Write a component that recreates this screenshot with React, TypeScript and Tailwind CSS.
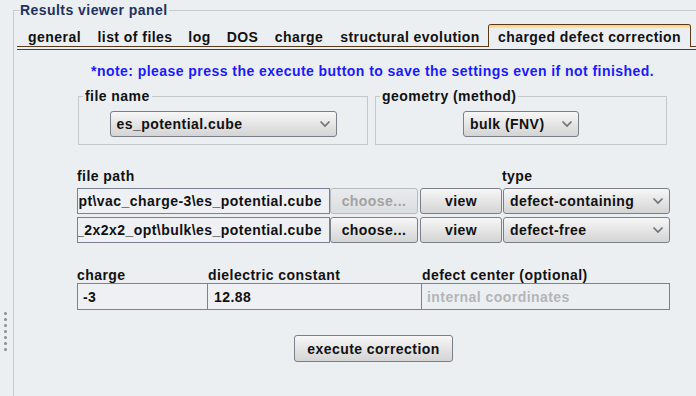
import React from 'react';

const TABS = [
    { label: 'general', w: 'w-[71px]' },
    { label: 'list of files', w: 'w-[90px]' },
    { label: 'log', w: 'w-[39px]' },
    { label: 'DOS', w: 'w-[47px]' },
    { label: 'charge', w: 'w-[66px]' },
    { label: 'structural evolution', w: 'w-[156px]' },
];

function Chevron() {
    return (
        <svg width="12" height="8" viewBox="0 0 12 8" className="shrink-0">
            <path d="M1.5 1.5 L6 6 L10.5 1.5" fill="none" stroke="#6f737a" strokeWidth="1.7" />
        </svg>
    );
}

function Combo({ label, className = '' }: { label: string; className?: string }) {
    return (
        <div className={`flex items-center justify-between h-[26px] pl-[6px] pr-[5px] rounded-[3px] border border-[#7b7f89] bg-linear-to-b from-[#f7f7f7] to-[#d4d4d4] ${className}`}>
            <span>{label}</span>
            <Chevron />
        </div>
    );
}

function Button({ label, disabled = false, className = '' }: { label: string; disabled?: boolean; className?: string }) {
    return (
        <button
            className={`flex items-center justify-center rounded-[3px] border ${disabled
                ? 'border-[#b7babf] bg-linear-to-b from-[#eaebed] to-[#dcdde0] text-[#a2a2a2]'
                : 'border-[#7b7f89] bg-linear-to-b from-[#f7f7f7] to-[#d4d4d4] text-[#111]'} ${className}`}
        >
            {label}
        </button>
    );
}

// path is longer than the field, so it gets clipped on the left like the original
function PathField({ path }: { path: string }) {
    return (
        <div className="flex items-center justify-end overflow-hidden w-[253px] h-[26px] pr-[7px] border border-[#7d7f92] bg-[#eef0f4]">
            <span className="shrink-0 whitespace-nowrap">{path}</span>
        </div>
    );
}

function Fieldset({ title, className = '', children }: { title: string; className?: string; children: React.ReactNode }) {
    return (
        <fieldset className={`min-w-0 h-[56px] border border-[#c4c8cd] pt-[7px] ${className}`}>
            <legend className="ml-[4px] px-[2px] leading-[15px]">{title}</legend>
            {children}
        </fieldset>
    );
}

export default function App() {
    return (
        <div className="w-[696px] h-[396px] overflow-hidden flex bg-[#eceff2] text-[14px] font-bold tracking-[0.45px] text-[#111] font-['Liberation_Sans',Arial,sans-serif]">
            {/* splitter handle */}
            <div className="w-[13px] shrink-0 flex flex-col gap-[3px] pl-[4px] pt-[312px]">
                {[0, 1, 2, 3, 4, 5, 6].map(i => (
                    <div key={i} className="w-[3px] h-[3px] rounded-full bg-[#8a8d91]" />
                ))}
            </div>

            <fieldset className="flex-1 min-w-0 mt-[3px] border-l border-t border-[#c6cacf]">
                <legend className="ml-[5px] px-[1px] leading-[15px] text-[#1f3262]">Results viewer panel</legend>

                {/* tab strip */}
                <div className="mt-[6px] ml-[3px] h-[26px] flex items-end border-b border-[#5b3a1c]">
                    <div className="w-[2px] h-[23px] mb-[2px] border-b border-[#5b3a1c]" />
                    {TABS.map(t => (
                        <div key={t.label} className={`${t.w} h-[23px] mb-[2px] pt-[5px] leading-[16px] text-center border-b border-[#5b3a1c]`}>
                            {t.label}
                        </div>
                    ))}
                    <div className="w-[203px] h-[23px] mb-[2px] border-l border-r border-t border-[#5b3a1c] rounded-t-[3px] overflow-hidden">
                        <div className="h-[3px] bg-linear-to-b from-[#ffcf7a] to-[#ffe2a8]" />
                        <div className="pt-[1px] leading-[16px] text-center">charged defect correction</div>
                    </div>
                    <div className="flex-1 h-[23px] mb-[2px] border-b border-[#5b3a1c]" />
                </div>

                {/* tab content */}
                <div className="pl-[63px] leading-[16px]">
                    <p className="mt-[13px] ml-[14px] text-[#1a1aff] whitespace-nowrap">
                        *note: please press the execute button to save the settings even if not finished.
                    </p>

                    <div className="mt-[10px] ml-[1px] flex gap-[7px]">
                        <Fieldset title="file name" className="w-[290px]">
                            <Combo label="es_potential.cube" className="w-[227px] mx-auto" />
                        </Fieldset>
                        <Fieldset title="geometry (method)" className="w-[292px]">
                            <Combo label="bulk (FNV)" className="w-[116px] mx-auto" />
                        </Fieldset>
                    </div>

                    <div className="mt-[23px] flex">
                        <span className="w-[425px]">file path</span>
                        <span>type</span>
                    </div>
                    <div className="mt-[4px] flex items-center">
                        <PathField path="C:\Users\calc\supercell_2x2x2_opt\vac_charge-3\es_potential.cube" />
                        <Button label="choose..." disabled className="w-[88px] h-[26px]" />
                        <Button label="view" className="ml-[2px] w-[82px] h-[26px]" />
                        <Combo label="defect-containing" className="ml-[1px] w-[167px] pl-[5px]" />
                    </div>
                    <div className="mt-[3px] flex items-center">
                        <PathField path="C:\Users\calc\supercell_2x2x2_opt\bulk\es_potential.cube" />
                        <Button label="choose..." className="w-[88px] h-[26px]" />
                        <Button label="view" className="ml-[2px] w-[82px] h-[26px]" />
                        <Combo label="defect-free" className="ml-[1px] w-[167px] pl-[5px]" />
                    </div>

                    <div className="mt-[24px] grid grid-cols-[131px_214px_248px]">
                        <span>charge</span>
                        <span>dielectric constant</span>
                        <span>defect center (optional)</span>
                        <div className="h-[27px] flex items-center pl-[5px] border border-[#7d7f92] bg-[#eef0f4]">-3</div>
                        <div className="h-[27px] flex items-center pl-[6px] border border-l-0 border-[#7d7f92] bg-[#eef0f4]">12.88</div>
                        <div className="h-[27px] flex items-center pl-[5px] border border-l-0 border-[#7d7f92] bg-[#eceff2] text-[#b3b5b8]">internal coordinates</div>
                    </div>

                    <Button label="execute correction" className="mt-[25px] ml-[217px] w-[159px] h-[27px]" />
                </div>
            </fieldset>
        </div>
    );
}
